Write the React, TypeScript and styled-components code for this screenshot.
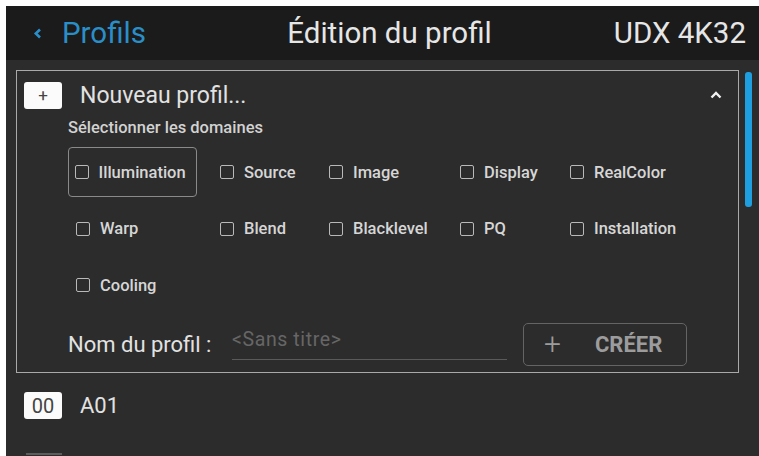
import React from 'react';
import styled, { createGlobalStyle } from 'styled-components';


// Style
const GlobalStyle = createGlobalStyle`
  html, body {
    margin: 0;
    padding: 0;
    background: #fff;
  }
  body {
    font-family: Roboto, "Liberation Sans", sans-serif;
  }
`;

const Screen = styled.div`
  margin: 6px 0 0 6px;
  width: 753px;
  height: 450px;
  background: #2c2c2c;
  overflow: hidden;
  display: flex;
  flex-direction: column;
`;

const TopBar = styled.header`
  height: 54px;
  flex: none;
  background: #1b1b1b;
  display: grid;
  grid-template-columns: 1fr auto 1fr;
  align-items: center;
  padding: 0 13px 0 27px;
  font-size: 29.5px;
  color: #e6e6e6;
`;

const Back = styled.div`
  display: flex;
  align-items: center;
  gap: 20px;
  color: #2a8fc8;
`;

const Title = styled.div`
  text-align: center;
`;

const Device = styled.div`
  text-align: right;
`;

const Body = styled.div`
  flex: 1;
  display: flex;
  min-height: 0;
`;

const List = styled.div`
  flex: 1;
  padding: 10px 6px 0 10px;
`;

const ScrollTrack = styled.div`
  width: 7px;
  margin-right: 7px;
  flex: none;
`;

const ScrollThumb = styled.div`
  margin-top: 12px;
  height: 135px;
  border-radius: 3px;
  background: #1ea0e0;
`;

const Panel = styled.section`
  border: 1.5px solid #a9a9a9;
  padding: 11px 16px 6.5px 7px;
  box-sizing: border-box;
`;

const PanelHead = styled.div`
  display: flex;
  align-items: center;
  gap: 18px;
  height: 26px;
  color: #e2e2e2;
  font-size: 23px;
`;

const Badge = styled.div<{ $wide?: boolean }>`
  width: 38px;
  height: 27px;
  border-radius: 3px;
  background: #fbfbfb;
  color: #444;
  display: flex;
  align-items: center;
  justify-content: center;
  font-size: ${p => (p.$wide ? '20px' : '17px')};
  flex: none;
`;

const HeadLabel = styled.div`
  flex: 1;
`;

const Inner = styled.div`
  padding-left: 44px;
`;

const Caption = styled.div`
  margin-top: 10px;
  font-size: 16.5px;
  font-weight: 500;
  color: #d2d2d2;
  line-height: 20px;
`;

const DomainGrid = styled.div`
  margin-top: 6px;
  display: grid;
  grid-template-columns: 144px 109px 131px 110px 1fr;
  grid-auto-rows: 56.5px;
`;

const Domain = styled.div<{ $focus?: boolean }>`
  align-self: center;
  justify-self: start;
  display: flex;
  align-items: center;
  gap: 10px;
  height: 50px;
  box-sizing: border-box;
  border: 1.5px solid ${p => (p.$focus ? '#8a8a8a' : 'transparent')};
  border-radius: 4px;
  width: ${p => (p.$focus ? '129px' : 'auto')};
  font-size: 16.5px;
  font-weight: 500;
  color: #d6d6d6;
  padding: 0 0 0 ${p => (p.$focus ? '5.5px' : '7px')};
  white-space: nowrap;
`;

const Box = styled.span`
  width: 12px;
  height: 12px;
  border: 1.5px solid #b9b9b9;
  border-radius: 2px;
  flex: none;
`;

const NameRow = styled.div`
  margin-top: 9px;
  display: flex;
  align-items: center;
  height: 43px;
`;

const NameLabel = styled.div`
  width: 164px;
  font-size: 22px;
  color: #e2e2e2;
`;

const NameInput = styled.div`
  width: 275px;
  height: 32px;
  box-sizing: border-box;
  border-bottom: 1.5px solid #5a5a5a;
  color: #666;
  font-size: 19.5px;
  letter-spacing: 0.6px;
`;

const CreateButton = styled.div`
  margin-left: 16px;
  width: 164px;
  height: 43px;
  box-sizing: border-box;
  border: 1.5px solid #646464;
  border-radius: 5px;
  display: flex;
  align-items: center;
  padding-left: 20px;
  color: #9c9c9c;
  gap: 34px;
`;

const Plus = styled.span`
  font-size: 30px;
  font-weight: 300;
  line-height: 1;
`;

const CreateLabel = styled.span`
  font-size: 22px;
  font-weight: 700;
`;

const Row = styled.div`
  display: flex;
  align-items: center;
  gap: 18px;
  height: 57px;
  padding-left: 8px;
  padding-top: 4px;
  font-size: 22px;
  color: #e2e2e2;
`;

const GhostBadge = styled.div`
  width: 36px;
  height: 27px;
  margin-left: 2px;
  border-top: 2px solid #5c5c5c;
  box-sizing: border-box;
`;


// Data
const domains = [
  'Illumination', 'Source', 'Image', 'Display', 'RealColor',
  'Warp', 'Blend', 'Blacklevel', 'PQ', 'Installation',
  'Cooling'
];


// Component
function App() {
  return (
    <>
      <GlobalStyle />
      <Screen>
        <TopBar>
          <Back>
            <svg width="9" height="13" viewBox="0 0 9 13">
              <path d="M7 2.5 L2.8 6.5 L7 10.5" fill="none" stroke="#2a8fc8" strokeWidth="2.6" />
            </svg>
            <span>Profils</span>
          </Back>
          <Title>Édition du profil</Title>
          <Device>UDX 4K32</Device>
        </TopBar>
        <Body>
          <List>
            <Panel>
              <PanelHead>
                <Badge>+</Badge>
                <HeadLabel>Nouveau profil...</HeadLabel>
                <svg width="12" height="8" viewBox="0 0 12 8">
                  <path d="M1.5 6.5 L6 2 L10.5 6.5" fill="none" stroke="#f2f2f2" strokeWidth="2.4" />
                </svg>
              </PanelHead>
              <Inner>
                <Caption>Sélectionner les domaines</Caption>
                <DomainGrid>
                  {domains.map((d, i) => (
                    <Domain key={d} $focus={i === 0}>
                      <Box />
                      {d}
                    </Domain>
                  ))}
                </DomainGrid>
                <NameRow>
                  <NameLabel>Nom du profil :</NameLabel>
                  <NameInput>&lt;Sans titre&gt;</NameInput>
                  <CreateButton>
                    <Plus>+</Plus>
                    <CreateLabel>CRÉER</CreateLabel>
                  </CreateButton>
                </NameRow>
              </Inner>
            </Panel>
            <Row>
              <Badge $wide>00</Badge>
              A01
            </Row>
            <Row>
              <GhostBadge />
            </Row>
          </List>
          <ScrollTrack>
            <ScrollThumb />
          </ScrollTrack>
        </Body>
      </Screen>
    </>
  );
}

export default App;
